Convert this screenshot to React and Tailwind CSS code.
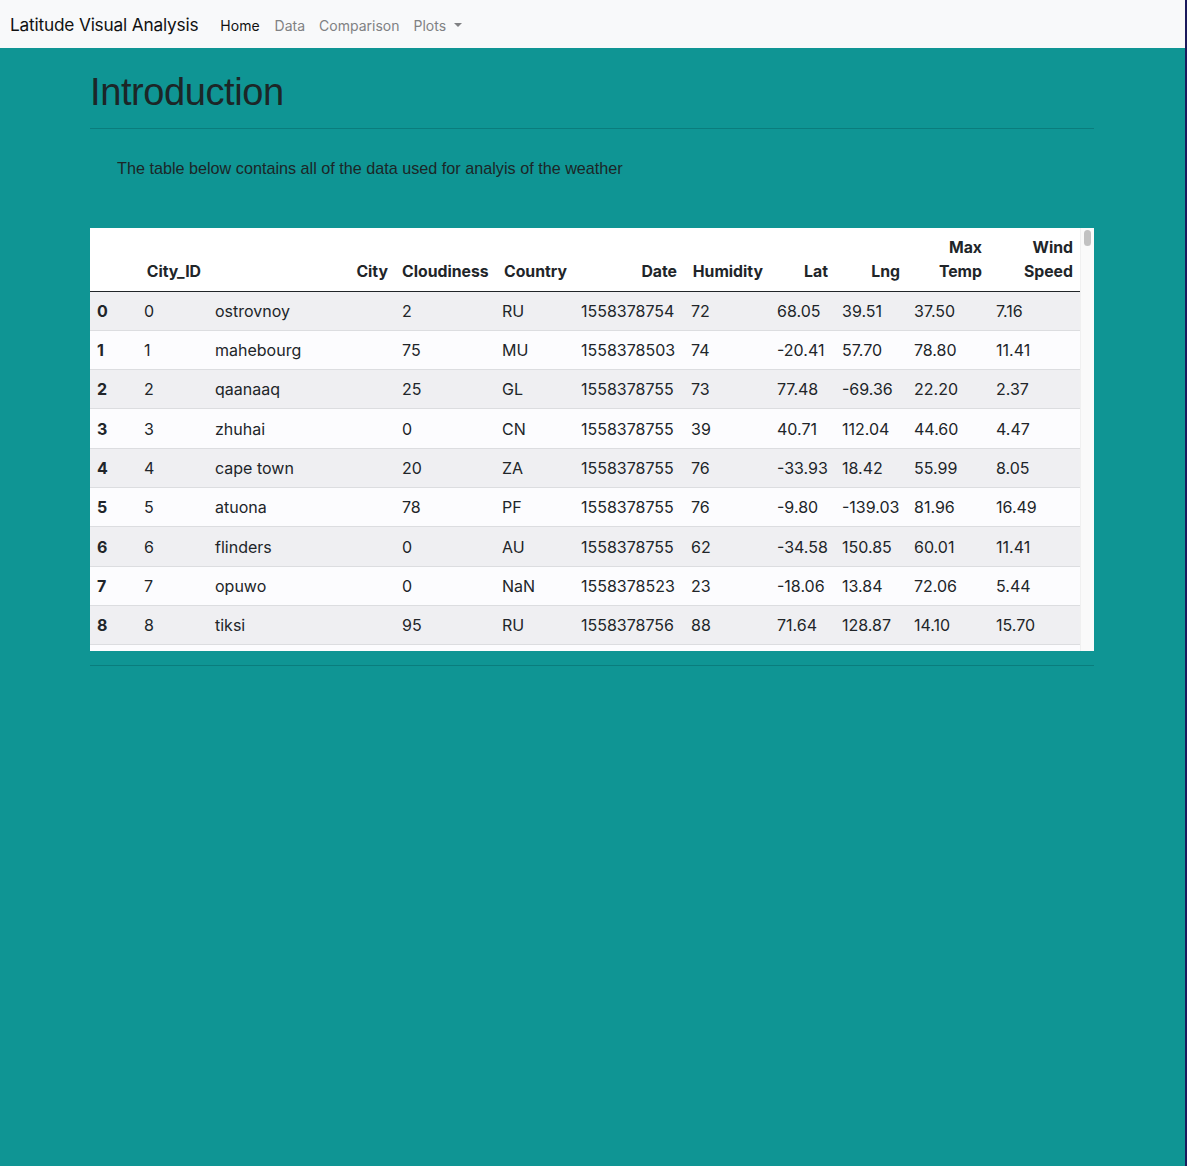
import React from "react";

const rows = [
  ["0", "0", "ostrovnoy", "2", "RU", "1558378754", "72", "68.05", "39.51", "37.50", "7.16"],
  ["1", "1", "mahebourg", "75", "MU", "1558378503", "74", "-20.41", "57.70", "78.80", "11.41"],
  ["2", "2", "qaanaaq", "25", "GL", "1558378755", "73", "77.48", "-69.36", "22.20", "2.37"],
  ["3", "3", "zhuhai", "0", "CN", "1558378755", "39", "40.71", "112.04", "44.60", "4.47"],
  ["4", "4", "cape town", "20", "ZA", "1558378755", "76", "-33.93", "18.42", "55.99", "8.05"],
  ["5", "5", "atuona", "78", "PF", "1558378755", "76", "-9.80", "-139.03", "81.96", "16.49"],
  ["6", "6", "flinders", "0", "AU", "1558378755", "62", "-34.58", "150.85", "60.01", "11.41"],
  ["7", "7", "opuwo", "0", "NaN", "1558378523", "23", "-18.06", "13.84", "72.06", "5.44"],
  ["8", "8", "tiksi", "95", "RU", "1558378756", "88", "71.64", "128.87", "14.10", "15.70"],
  ["", "", "", "", "", "", "", "", "", "", ""],
];

const widths = [47, 71, 187, 100, 79, 110, 86, 65, 72, 82, 91];

const headers = [
  [""],
  ["City_ID"],
  ["City"],
  ["Cloudiness"],
  ["Country"],
  ["Date"],
  ["Humidity"],
  ["Lat"],
  ["Lng"],
  ["Max", "Temp"],
  ["Wind", "Speed"],
];

export default function App() {
  return (
    <div className="flex w-full h-[1166px]">
      <div className="flex-1 flex flex-col bg-[#0f9594]">
        <nav
          className="h-[48px] bg-[#f8f9fa] flex items-center pl-[10px] pt-[2px]"
          style={{ fontFamily: "Inter, 'Noto Sans', sans-serif" }}
        >
          <span className="text-[17.3px] text-[#111] tracking-[-0.2px]">Latitude Visual Analysis</span>
          <div className="flex items-center ml-[22px] text-[14px]">
            <span className="text-[#111]">Home</span>
            <span className="ml-[15px] text-[#808183]">Data</span>
            <span className="ml-[14px] text-[#808183]">Comparison</span>
            <span className="ml-[14px] text-[#808183] flex items-center">
              Plots
              <span className="ml-[8px] inline-block w-0 h-0 border-l-[4px] border-r-[4px] border-t-[4px] border-l-transparent border-r-transparent border-t-[#808183]" />
            </span>
          </div>
        </nav>
        <main className="ml-[90px] w-[1004px] pt-[20px]" style={{ fontFamily: "'Liberation Sans', Arial, sans-serif" }}>
          <h1 className="text-[38px] leading-[48px] text-[#1c2627] tracking-[-0.4px]">Introduction</h1>
          <hr className="mt-[12px] border-t border-[#0a7d7d]" />
          <p className="mt-[27px] pl-[27px] text-[16.2px] leading-[24px] text-[#1c2627]">
            The table below contains all of the data used for analyis of the weather
          </p>
          <div className="mt-[48px] h-[423px] bg-white flex overflow-hidden">
            <div
              className="w-[990px] h-full overflow-hidden"
              style={{ fontFamily: "Inter, 'Noto Sans', sans-serif" }}
            >
              <table className="table-fixed border-collapse w-[990px] text-[16px] text-[#212529]">
                <colgroup>
                  {widths.map((w, i) => (
                    <col key={i} style={{ width: w }} />
                  ))}
                </colgroup>
                <thead>
                  <tr className="h-[63px] border-b border-[#212529] bg-white">
                    {headers.map((h, i) => (
                      <th key={i} className="px-[7px] pb-[7px] align-bottom text-right font-bold leading-[24px] text-[15.8px]">
                        {h.map((l, j) => (
                          <div key={j}>{l}</div>
                        ))}
                      </th>
                    ))}
                  </tr>
                </thead>
                <tbody>
                  {rows.map((r, ri) => (
                    <tr
                      key={ri}
                      className={`h-[39.33px] border-b border-[#dcdde0] ${ri % 2 === 0 ? "bg-[#efeff2]" : "bg-[#fcfcfe]"}`}
                    >
                      {r.map((c, ci) => (
                        <td
                          key={ci}
                          className={`px-[7px] py-0 align-middle text-left whitespace-nowrap ${ci === 0 ? "font-bold" : ""}`}
                        >
                          {c}
                        </td>
                      ))}
                    </tr>
                  ))}
                </tbody>
              </table>
            </div>
            <div className="w-[14px] h-full bg-[#fafafa] border-l border-[#f0f0f0] pt-[2px] flex justify-center">
              <div className="w-[7px] h-[16px] rounded-full bg-[#c2c2c2]" />
            </div>
          </div>
          <hr className="mt-[14px] border-t border-[#0a7d7d]" />
        </main>
      </div>
      <div className="w-[2px] h-full bg-[#1b1a5c]" />
    </div>
  );
}
